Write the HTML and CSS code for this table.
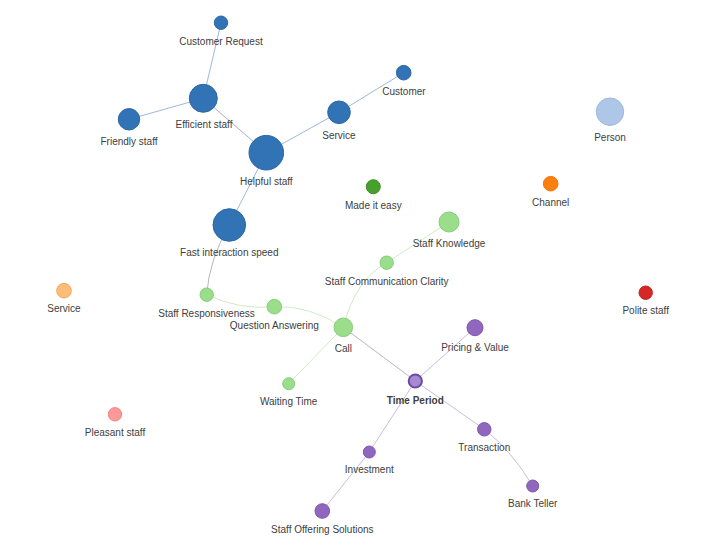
FILE: index.html
```html
<!DOCTYPE html>
<html lang="en">
<head>
<meta charset="utf-8">
<title>Network</title>
<link rel="stylesheet" href="styles.css">
</head>
<body>
<main class="canvas">
<svg class="graph" width="710" height="556" viewBox="0 0 710 556" xmlns="http://www.w3.org/2000/svg">
  <g class="links">
    <path class="link blue" d="M221,23 L203.3,98.3"/>
    <path class="link blue" d="M203.3,98.3 L129,119.3"/>
    <path class="link grayblue" d="M203.3,98.3 L266.3,152.7"/>
    <path class="link blue" d="M266.3,152.7 L339,112.3"/>
    <path class="link blue" d="M339,112.3 L403.7,72.7"/>
    <path class="link blue" d="M266.3,152.7 L229.3,225"/>
    <path class="link gray" d="M229.3,225 Q209,260 206.7,294.7"/>
    <path class="link green" d="M206.7,294.7 Q240.5,310.3 274.3,306.7"/>
    <path class="link green" d="M274.3,306.7 Q308.8,305 343.3,327.3"/>
    <path class="link green" d="M343.3,327.3 Q355,280 386.7,262.7"/>
    <path class="link green" d="M386.7,262.7 L449,222"/>
    <path class="link green" d="M343.3,327.3 L288.7,383.7"/>
    <path class="link purplegray" d="M343.3,327.3 L415.3,381"/>
    <path class="link purple" d="M415.3,381 L475,327.7"/>
    <path class="link purple" d="M415.3,381 L484.3,429.3"/>
    <path class="link purple" d="M484.3,429.3 Q512,451 532.7,486"/>
    <path class="link purple" d="M415.3,381 L369.3,452"/>
    <path class="link purple" d="M369.3,452 L322.3,511"/>
  </g>
  <g class="nodes">
    <circle class="node c-blue" cx="221" cy="22.7" r="6.7"/>
    <circle class="node c-blue" cx="203.3" cy="98.3" r="14"/>
    <circle class="node c-blue" cx="129" cy="119.3" r="10.7"/>
    <circle class="node c-blue" cx="403.7" cy="72.7" r="7.3"/>
    <circle class="node c-blue" cx="339" cy="112.3" r="11.3"/>
    <circle class="node c-blue" cx="266.3" cy="152.7" r="17.3"/>
    <circle class="node c-blue" cx="229.3" cy="225" r="16.3"/>
    <circle class="node c-green" cx="373.3" cy="186.7" r="7"/>
    <circle class="node c-ltgreen" cx="449" cy="222" r="10"/>
    <circle class="node c-ltgreen" cx="386.7" cy="262.7" r="6.7"/>
    <circle class="node c-ltgreen" cx="206.7" cy="294.7" r="6.7"/>
    <circle class="node c-ltgreen" cx="274.3" cy="306.7" r="7.3"/>
    <circle class="node c-ltgreen" cx="343.3" cy="327.3" r="9.3"/>
    <circle class="node c-ltgreen" cx="288.7" cy="383.7" r="6"/>
    <circle class="node c-purple" cx="475" cy="327.7" r="8"/>
    <circle class="node c-purple c-focus" cx="415.3" cy="381" r="6.6"/>
    <circle class="node c-purple" cx="484.3" cy="429.3" r="6.7"/>
    <circle class="node c-purple" cx="532.7" cy="486" r="6"/>
    <circle class="node c-purple" cx="369.3" cy="452" r="6"/>
    <circle class="node c-purple" cx="322.3" cy="511" r="7.3"/>
    <circle class="node c-ltblue" cx="610" cy="111.7" r="13.7"/>
    <circle class="node c-orange" cx="550.7" cy="183.7" r="7.3"/>
    <circle class="node c-red" cx="645.7" cy="292.7" r="6.7"/>
    <circle class="node c-ltorange" cx="64" cy="290.7" r="7.3"/>
    <circle class="node c-pink" cx="115" cy="414.3" r="6.7"/>
  </g>
  <g class="labels">
    <text class="label" x="221" y="44.5">Customer Request</text>
    <text class="label" x="204" y="127.5">Efficient staff</text>
    <text class="label" x="129" y="144.5">Friendly staff</text>
    <text class="label" x="404" y="94.5">Customer</text>
    <text class="label" x="339" y="139">Service</text>
    <text class="label" x="266.3" y="185">Helpful staff</text>
    <text class="label" x="229.3" y="255.5">Fast interaction speed</text>
    <text class="label" x="373.3" y="208.5">Made it easy</text>
    <text class="label" x="449" y="247">Staff Knowledge</text>
    <text class="label" x="386.7" y="284.5">Staff Communication Clarity</text>
    <text class="label" x="206.5" y="316.5">Staff Responsiveness</text>
    <text class="label" x="274.3" y="329">Question Answering</text>
    <text class="label" x="343.3" y="351.5">Call</text>
    <text class="label" x="288.7" y="404.5">Waiting Time</text>
    <text class="label bold" x="415.3" y="403.5">Time Period</text>
    <text class="label" x="475" y="350.5">Pricing &amp; Value</text>
    <text class="label" x="484.3" y="450.5">Transaction</text>
    <text class="label" x="532.7" y="506.5">Bank Teller</text>
    <text class="label" x="369.3" y="472.5">Investment</text>
    <text class="label" x="322.3" y="532.5">Staff Offering Solutions</text>
    <text class="label" x="610" y="140.5">Person</text>
    <text class="label" x="550.7" y="205.5">Channel</text>
    <text class="label" x="645.7" y="313.5">Polite staff</text>
    <text class="label" x="64" y="312">Service</text>
    <text class="label" x="115" y="436">Pleasant staff</text>
  </g>
</svg>
</main>
</body>
</html>
```
FILE: styles.css
```css
html, body {
  margin: 0;
  padding: 0;
  background: #ffffff;
}

.canvas {
  width: 710px;
  height: 556px;
  overflow: hidden;
}

.graph {
  display: block;
}

.link {
  fill: none;
  stroke-width: 1;
}

.link.blue { stroke: #9db9da; }
.link.grayblue { stroke: #a8b2c2; }
.link.gray { stroke: #b6b6bc; }
.link.green { stroke: #cfebc3; }
.link.purplegray { stroke: #bcb4cb; }
.link.purple { stroke: #c9bddf; }

.node {
  stroke-width: 1;
}

.c-blue { fill: #3173b5; stroke: #2b68a6; }
.c-green { fill: #46a02b; stroke: #3b8e22; }
.c-ltgreen { fill: #9ade8b; stroke: #86cd77; }
.c-purple { fill: #9066be; stroke: #7f56ad; }
.c-focus { fill: #a58acf; stroke: #6a4aa6; stroke-width: 2; }
.c-ltblue { fill: #aec7e8; stroke: #9db8dc; }
.c-orange { fill: #ff7f0e; stroke: #f07406; }
.c-red { fill: #d62728; stroke: #c21f20; }
.c-ltorange { fill: #ffbb78; stroke: #eda862; }
.c-pink { fill: #ff9896; stroke: #ec8886; }

.label {
  font-family: "Liberation Sans", Arial, sans-serif;
  font-size: 10px;
  fill: #404040;
  text-anchor: middle;
}

.label.bold {
  font-weight: bold;
}
```
